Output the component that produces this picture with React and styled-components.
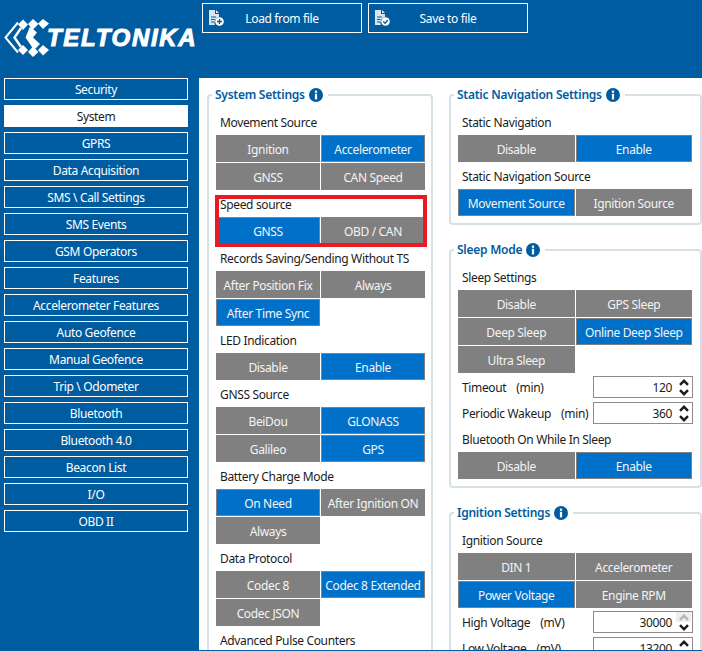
import styled, { createGlobalStyle } from "styled-components";

const BLUE = "#005ca1";
const ACTIVE = "#0070c8";

const GlobalStyle = createGlobalStyle`
  html, body {
    margin: 0;
    padding: 0;
    background: ${BLUE};
  }
  * {
    box-sizing: border-box;
  }
`;

const Styled = {
  Page: styled.div`
    width: 702px;
    height: 651px;
    overflow: hidden;
    background: ${BLUE};
    font-family: "Noto Sans", "Open Sans", sans-serif;
    font-size: 12px;
    letter-spacing: -0.35px;
    color: #1c1c1c;
  `,

  Header: styled.header`
    height: 78px;
    display: flex;
    align-items: flex-start;
  `,

  Logo: styled.div`
    width: 202px;
    height: 78px;
    padding: 19px 0 0 4px;
    display: flex;
    align-items: flex-start;
  `,

  LogoText: styled.span`
    margin: 6px 0 0 -3px;
    font-family: "Liberation Sans", sans-serif;
    font-size: 24px;
    line-height: 26px;
    font-weight: 700;
    font-style: italic;
    letter-spacing: 1.7px;
    color: #fff;
    -webkit-text-stroke: 1px #fff;
  `,

  FileActions: styled.div`
    padding-top: 3px;
    display: flex;
    gap: 6px;
  `,

  FileButton: styled.button`
    width: 160px;
    height: 30px;
    padding: 0;
    display: grid;
    grid-template-columns: 1fr auto 1fr;
    align-items: center;
    color: #fff;
    font: inherit;
    letter-spacing: inherit;
    background: transparent;
    border: 1px solid #fff;

    svg {
      display: block;
      margin-left: 5px;
    }
  `,

  Body: styled.div`
    height: 572px;
    display: flex;
  `,

  Sidebar: styled.nav`
    width: 199px;
    padding-left: 4px;
    display: flex;
    flex-direction: column;
    gap: 5px;
  `,

  NavItem: styled.div`
    width: 184px;
    height: 22px;
    line-height: 21px;
    text-align: center;
    color: ${({ $active }) => ($active ? "#1c1c1c" : "#fff")};
    background: ${({ $active }) => ($active ? "#fff" : "transparent")};
    border: 1px solid #fff;
  `,

  Content: styled.main`
    flex: 1;
    padding: 8px 0 0 8px;
    display: grid;
    grid-template-columns: 226px 253px;
    column-gap: 16px;
    align-items: start;
    overflow: hidden;
    background: #fff;
  `,

  Column: styled.div`
    display: flex;
    flex-direction: column;
    gap: 16px;
  `,

  Group: styled.fieldset`
    margin: 0;
    padding: 0 ${({ $wide }) => ($wide ? 8 : 6)}px 6px 7px;
    min-width: 0;
    border: 2px solid #d6e0e7;
    border-radius: 4px;
  `,

  Legend: styled.legend`
    height: 18px;
    margin-left: -4px;
    padding: 0 5px 0 3px;
    display: flex;
    align-items: center;
    gap: 4px;
    font-size: 12px;
    font-weight: 600;
    letter-spacing: -0.25px;
    color: ${BLUE};
  `,

  LegendTitle: styled.span`
    line-height: 18px;
  `,

  GroupBody: styled.div`
    padding-top: 7px;
    display: flex;
    flex-direction: column;
    gap: 2px;
  `,

  Section: styled.section`
    position: relative;
  `,

  Highlight: styled.div`
    position: absolute;
    top: 2px;
    left: -1px;
    right: -2px;
    bottom: -2px;
    border: 4px solid #e81b23;
    pointer-events: none;
  `,

  Label: styled.div`
    height: 24px;
    padding-left: 4px;
    line-height: 24px;
    white-space: nowrap;
  `,

  Options: styled.div`
    display: grid;
    grid-template-columns: 1fr 1fr;
    grid-auto-rows: 27px;
    gap: 1px;
    margin-bottom: 1px;
  `,

  Option: styled.div`
    line-height: 27px;
    text-align: center;
    white-space: nowrap;
    color: #f4f4f4;
    background: ${({ $on }) => ($on ? ACTIVE : "#808080")};
    border: 1px solid #808080;
  `,

  FieldRows: styled.div`
    margin-top: -2px;
  `,

  FieldRow: styled.div`
    height: 26px;
    padding-left: 4px;
    display: flex;
    align-items: center;
    justify-content: space-between;
    white-space: nowrap;
  `,

  FieldName: styled.span`
    i {
      margin-left: 10px;
      font-style: normal;
    }
  `,

  Spin: styled.div`
    width: 100px;
    height: 22px;
    margin-right: -1px;
    padding: 0 1px 0 0;
    display: flex;
    align-items: center;
    justify-content: flex-end;
    color: #1c1c1c;
    background: #fff;
    border: 1px solid #8c8c8c;
  `,

  SpinValue: styled.span`
    margin-right: 4px;
  `,

  SpinArrows: styled.div`
    width: 15px;
    height: 20px;
    display: flex;
    flex-direction: column;
  `,

  SpinArrow: styled.div`
    flex: 1;
    display: flex;
    align-items: center;
    justify-content: center;
    background: ${({ $disabled }) => ($disabled ? "#eeeeee" : "transparent")};

    svg {
      display: block;
    }
  `,
};

const NAV_ITEMS = [
  "Security",
  "System",
  "GPRS",
  "Data Acquisition",
  "SMS \\ Call Settings",
  "SMS Events",
  "GSM Operators",
  "Features",
  "Accelerometer Features",
  "Auto Geofence",
  "Manual Geofence",
  "Trip \\ Odometer",
  "Bluetooth",
  "Bluetooth 4.0",
  "Beacon List",
  "I/O",
  "OBD II",
];

function LogoMark() {
  return (
    <svg width="46" height="38" viewBox="0 0 46 38">
      <path d="M14 3.5 L1.5 18.5 L14 33.5" fill="none" stroke="#fff" strokeWidth="2" />
      <path d="M17 9 L10.5 18.5 L17 28" fill="none" stroke="#fff" strokeWidth="2.4" />
      <g fill="#fff">
        <path d="M19 0.5 L24 5.5 L19 11 L14 5.5 Z" />
        <path d="M29 0 L34.5 5 L29 10.5 L24 5 Z" />
        <path d="M39 0 L45 4.5 L39 10 L34 4.5 Z" />
        <path d="M26 7.5 L33 13.5 L29 18.5 L36 25 L30 31 L21.5 18.5 Z" />
        <path d="M19 26 L24 31 L19 36 L14 31 Z" />
        <path d="M29 27.5 L34.5 33 L29 38 L24 33 Z" />
        <path d="M39 26 L45 31 L39 36.5 L34 31 Z" />
      </g>
    </svg>
  );
}

function FileIcon({ kind }) {
  return (
    <svg width="17" height="18" viewBox="0 0 17 18">
      <path d="M1 1 H7 V5 H11 V8 A5.5 5.5 0 0 0 7 16 H1 Z" fill="#d9e6f0" />
      <path d="M8 1 L11 4 H8 Z" fill="#d9e6f0" />
      <path d="M3 8 H8 M3 10.5 H6.5 M3 13 H6" stroke={BLUE} strokeWidth="1" />
      <circle cx="11.5" cy="12.5" r="4.3" fill="#fff" />
      {kind === "plus" ? (
        <path d="M9 12.5 H14 M11.5 10 V15" stroke={BLUE} strokeWidth="1.3" />
      ) : (
        <path d="M9.3 12.5 L11 14.2 L13.8 11" stroke={BLUE} strokeWidth="1.3" fill="none" />
      )}
    </svg>
  );
}

function InfoIcon() {
  return (
    <svg width="14" height="14" viewBox="0 0 14 14">
      <circle cx="7" cy="7" r="7" fill={BLUE} />
      <rect x="5.9" y="2.6" width="2.2" height="2.2" fill="#fff" />
      <rect x="5.9" y="5.8" width="2.2" height="5.6" fill="#fff" />
    </svg>
  );
}

function Chevron({ up, color = "#1c1c1c" }) {
  return (
    <svg width="10" height="7" viewBox="0 0 10 7">
      <path
        d={up ? "M1 5.8 L5 1.8 L9 5.8" : "M1 1.2 L5 5.2 L9 1.2"}
        fill="none"
        stroke={color}
        strokeWidth="2.4"
      />
    </svg>
  );
}

function OptionSection({ label, options, active, highlighted }) {
  return (
    <Styled.Section>
      <Styled.Label>{label}</Styled.Label>
      <Styled.Options>
        {options.map((option) => (
          <Styled.Option key={option} $on={active.includes(option)}>
            {option}
          </Styled.Option>
        ))}
      </Styled.Options>
      {highlighted && <Styled.Highlight />}
    </Styled.Section>
  );
}

function SpinField({ name, unit, value, upDisabled }) {
  return (
    <Styled.FieldRow>
      <Styled.FieldName>
        {name}
        <i>({unit})</i>
      </Styled.FieldName>
      <Styled.Spin>
        <Styled.SpinValue>{value}</Styled.SpinValue>
        <Styled.SpinArrows>
          <Styled.SpinArrow $disabled={upDisabled}>
            <Chevron up color={upDisabled ? "#b5b5b5" : "#1c1c1c"} />
          </Styled.SpinArrow>
          <Styled.SpinArrow>
            <Chevron />
          </Styled.SpinArrow>
        </Styled.SpinArrows>
      </Styled.Spin>
    </Styled.FieldRow>
  );
}

function Group({ title, wide, children }) {
  return (
    <Styled.Group $wide={wide}>
      <Styled.Legend>
        <Styled.LegendTitle>{title}</Styled.LegendTitle>
        <InfoIcon />
      </Styled.Legend>
      <Styled.GroupBody>{children}</Styled.GroupBody>
    </Styled.Group>
  );
}

export default function App() {
  return (
    <Styled.Page>
      <GlobalStyle />
      <Styled.Header>
        <Styled.Logo>
          <LogoMark />
          <Styled.LogoText>TELTONIKA</Styled.LogoText>
        </Styled.Logo>
        <Styled.FileActions>
          <Styled.FileButton>
            <FileIcon kind="plus" />
            <span>Load from file</span>
          </Styled.FileButton>
          <Styled.FileButton>
            <FileIcon kind="check" />
            <span>Save to file</span>
          </Styled.FileButton>
        </Styled.FileActions>
      </Styled.Header>

      <Styled.Body>
        <Styled.Sidebar>
          {NAV_ITEMS.map((item) => (
            <Styled.NavItem key={item} $active={item === "System"}>
              {item}
            </Styled.NavItem>
          ))}
        </Styled.Sidebar>

        <Styled.Content>
          <Styled.Column>
            <Group title="System Settings">
              <OptionSection
                label="Movement Source"
                options={["Ignition", "Accelerometer", "GNSS", "CAN Speed"]}
                active={["Accelerometer"]}
              />
              <OptionSection
                label="Speed source"
                options={["GNSS", "OBD / CAN"]}
                active={["GNSS"]}
                highlighted
              />
              <OptionSection
                label="Records Saving/Sending Without TS"
                options={["After Position Fix", "Always", "After Time Sync"]}
                active={["After Time Sync"]}
              />
              <OptionSection
                label="LED Indication"
                options={["Disable", "Enable"]}
                active={["Enable"]}
              />
              <OptionSection
                label="GNSS Source"
                options={["BeiDou", "GLONASS", "Galileo", "GPS"]}
                active={["GLONASS", "GPS"]}
              />
              <OptionSection
                label="Battery Charge Mode"
                options={["On Need", "After Ignition ON", "Always"]}
                active={["On Need"]}
              />
              <OptionSection
                label="Data Protocol"
                options={["Codec 8", "Codec 8 Extended", "Codec JSON"]}
                active={["Codec 8 Extended"]}
              />
              <Styled.Label>Advanced Pulse Counters</Styled.Label>
            </Group>
          </Styled.Column>

          <Styled.Column>
            <Group title="Static Navigation Settings" wide>
              <OptionSection
                label="Static Navigation"
                options={["Disable", "Enable"]}
                active={["Enable"]}
              />
              <OptionSection
                label="Static Navigation Source"
                options={["Movement Source", "Ignition Source"]}
                active={["Movement Source"]}
              />
            </Group>

            <Group title="Sleep Mode" wide>
              <OptionSection
                label="Sleep Settings"
                options={["Disable", "GPS Sleep", "Deep Sleep", "Online Deep Sleep", "Ultra Sleep"]}
                active={["Online Deep Sleep"]}
              />
              <Styled.FieldRows>
                <SpinField name="Timeout" unit="min" value="120" />
                <SpinField name="Periodic Wakeup" unit="min" value="360" />
              </Styled.FieldRows>
              <OptionSection
                label="Bluetooth On While In Sleep"
                options={["Disable", "Enable"]}
                active={["Enable"]}
              />
            </Group>

            <Group title="Ignition Settings" wide>
              <OptionSection
                label="Ignition Source"
                options={["DIN 1", "Accelerometer", "Power Voltage", "Engine RPM"]}
                active={["Power Voltage"]}
              />
              <Styled.FieldRows>
                <SpinField name="High Voltage" unit="mV" value="30000" upDisabled />
                <SpinField name="Low Voltage" unit="mV" value="13200" />
              </Styled.FieldRows>
            </Group>
          </Styled.Column>
        </Styled.Content>
      </Styled.Body>
    </Styled.Page>
  );
}
